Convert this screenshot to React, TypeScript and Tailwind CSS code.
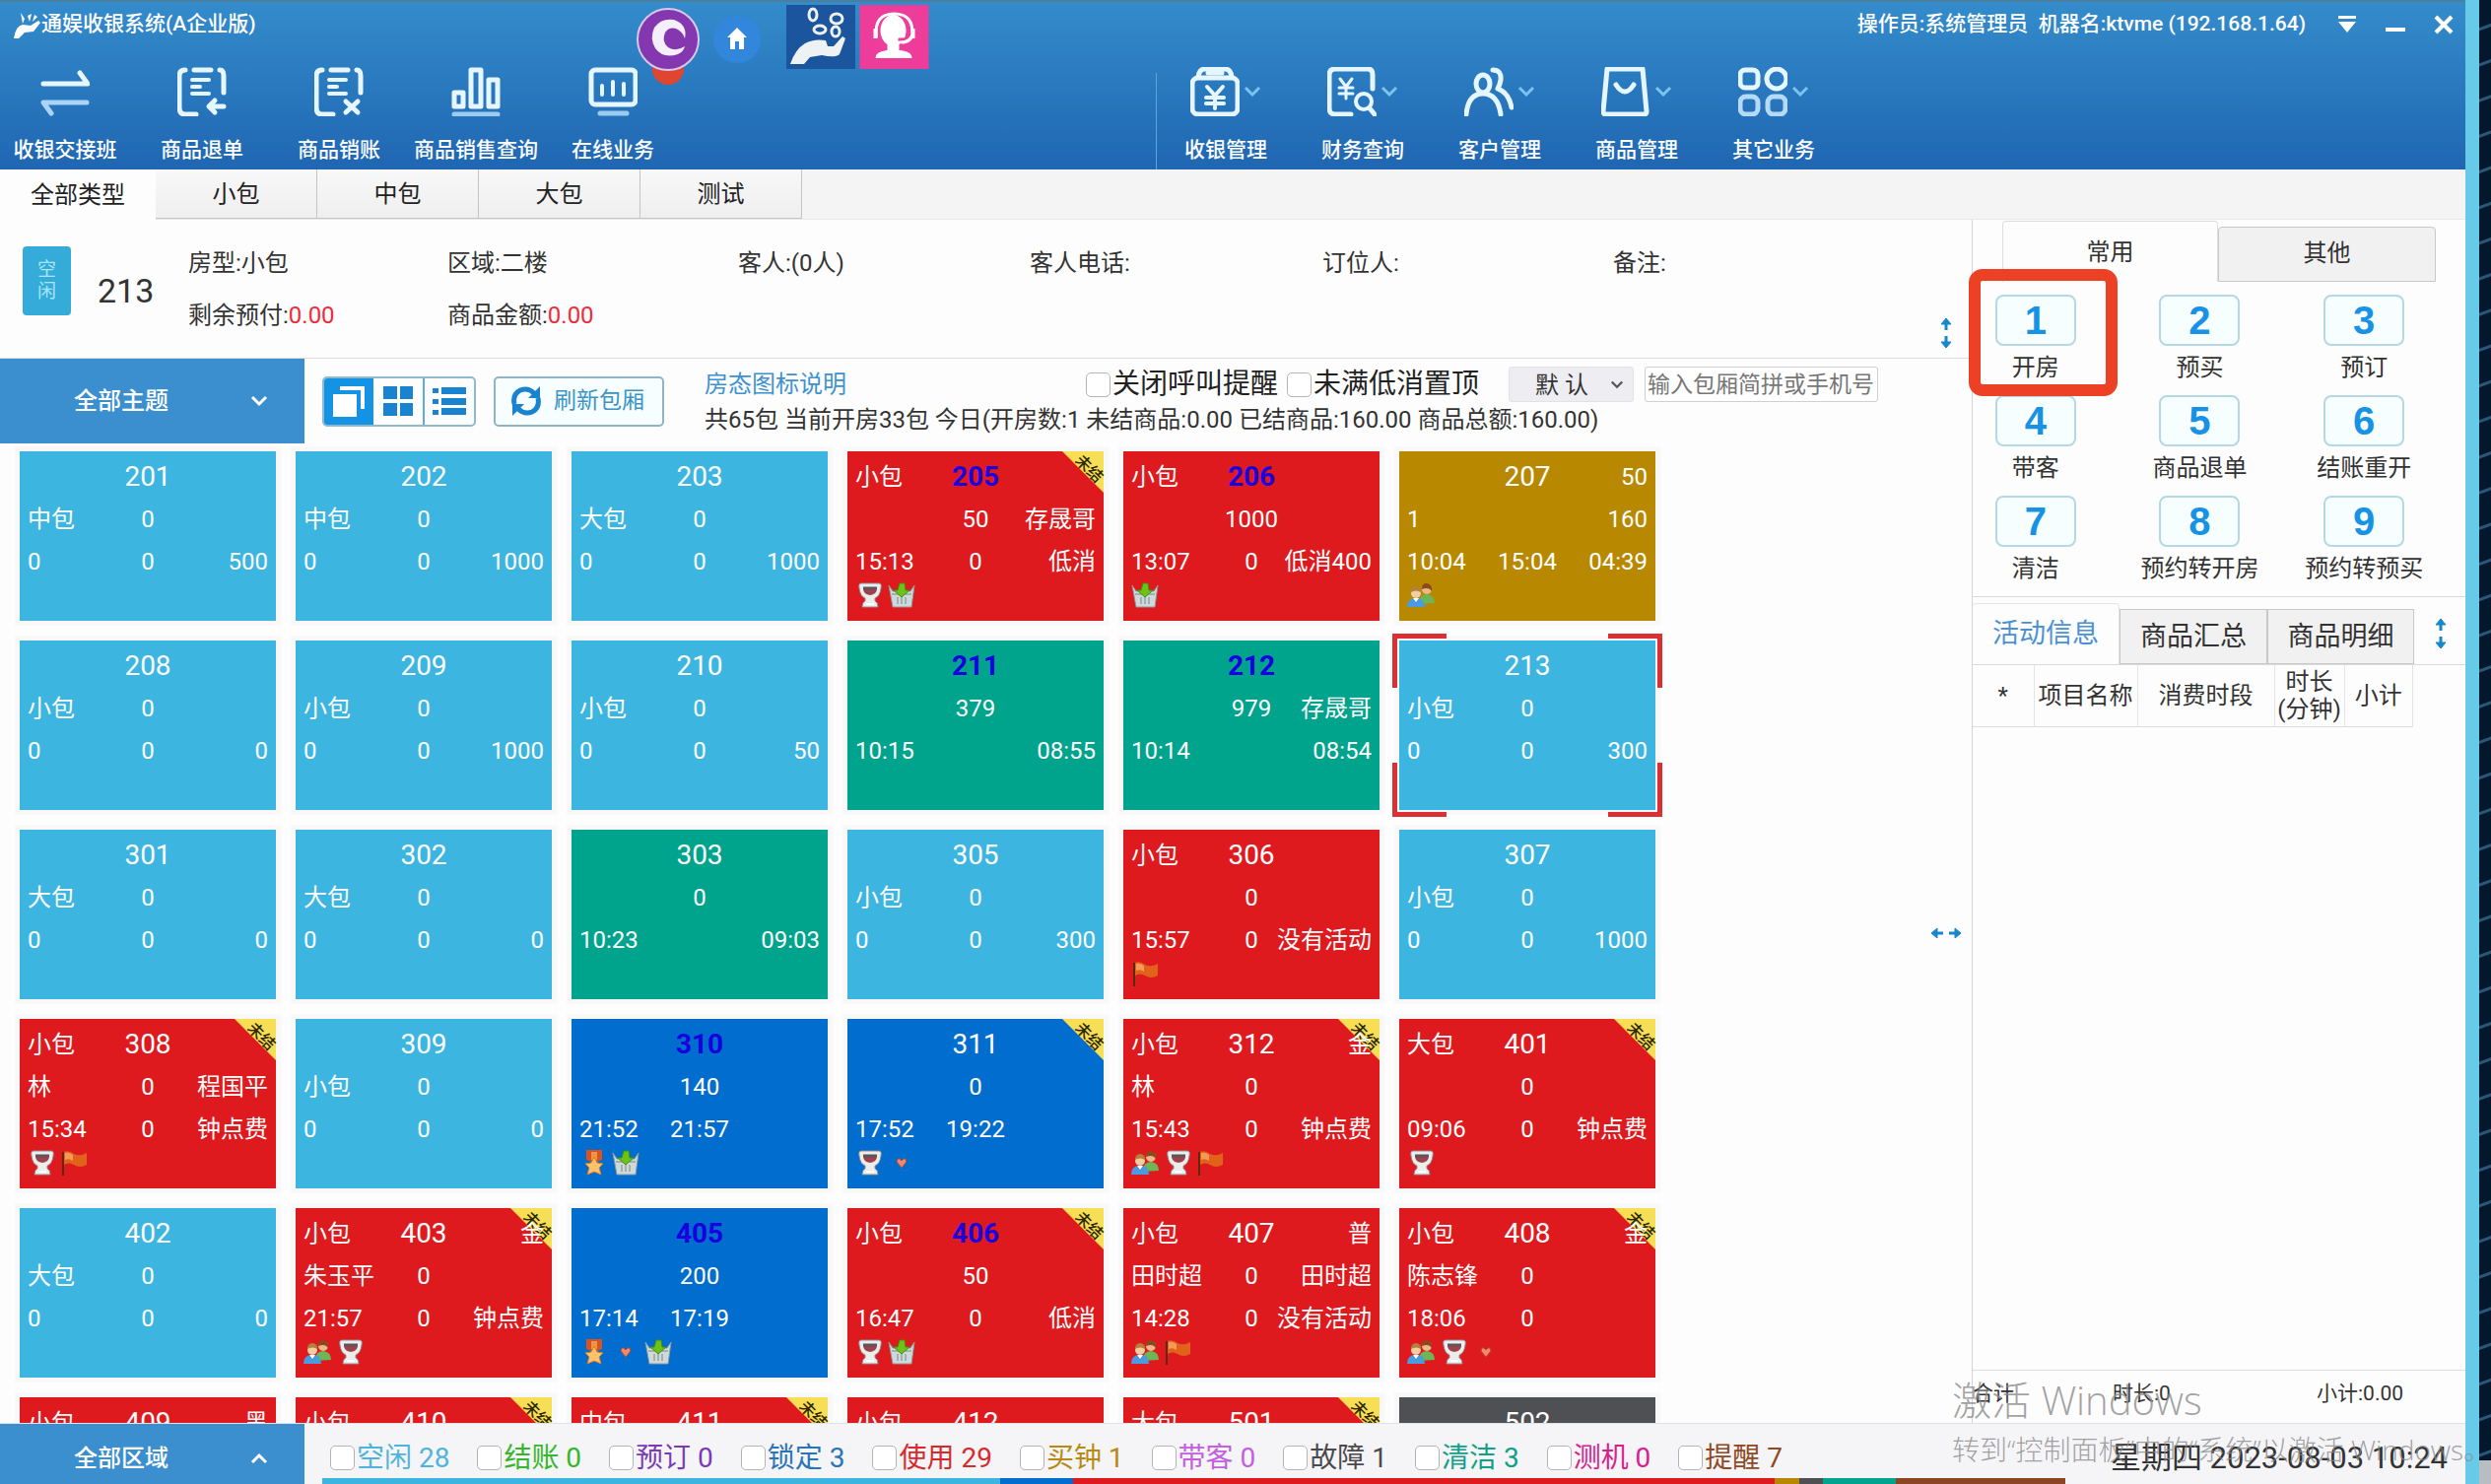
import type { ReactNode } from 'react'

type IconName = 'cup' | 'basket' | 'people' | 'flag' | 'medal' | 'heart'

type Room = {
  no: string
  color: string
  // three rows of left / middle / right; the middle of the first row is the room number
  tl?: string
  tr?: string
  row2?: [string, string, string]
  row3?: [string, string, string]
  icons?: IconName[]
  blue?: boolean
  unpaid?: boolean
  selected?: boolean
}

const FREE = 'bg-[#3db5e1]'
const USED = 'bg-[#de1a1e]'
const CLEAN = 'bg-[#00a38c]'
const LOCKED = 'bg-[#016dce]'
const CLOCK = 'bg-[#b88800]'
const BROKEN = 'bg-[#4f5054]'

const free = (no: string, kind: string, min: string): Room => ({
  no,
  color: FREE,
  row2: [kind, '0', ''],
  row3: ['0', '0', min],
})

const rooms: Room[] = [
  free('201', '中包', '500'),
  free('202', '中包', '1000'),
  free('203', '大包', '1000'),
  { no: '205', color: USED, tl: '小包', blue: true, unpaid: true, row2: ['', '50', '存晟哥'], row3: ['15:13', '0', '低消'], icons: ['cup', 'basket'] },
  { no: '206', color: USED, tl: '小包', blue: true, row2: ['', '1000', ''], row3: ['13:07', '0', '低消400'], icons: ['basket'] },
  { no: '207', color: CLOCK, tr: '50', row2: ['1', '', '160'], row3: ['10:04', '15:04', '04:39'], icons: ['people'] },
  free('208', '小包', '0'),
  free('209', '小包', '1000'),
  free('210', '小包', '50'),
  { no: '211', color: CLEAN, blue: true, row2: ['', '379', ''], row3: ['10:15', '', '08:55'] },
  { no: '212', color: CLEAN, blue: true, row2: ['', '979', '存晟哥'], row3: ['10:14', '', '08:54'] },
  { ...free('213', '小包', '300'), selected: true },
  free('301', '大包', '0'),
  free('302', '大包', '0'),
  { no: '303', color: CLEAN, row2: ['', '0', ''], row3: ['10:23', '', '09:03'] },
  free('305', '小包', '300'),
  { no: '306', color: USED, tl: '小包', row2: ['', '0', ''], row3: ['15:57', '0', '没有活动'], icons: ['flag'] },
  free('307', '小包', '1000'),
  { no: '308', color: USED, tl: '小包', unpaid: true, row2: ['林', '0', '程国平'], row3: ['15:34', '0', '钟点费'], icons: ['cup', 'flag'] },
  free('309', '小包', '0'),
  { no: '310', color: LOCKED, blue: true, row2: ['', '140', ''], row3: ['21:52', '21:57', ''], icons: ['medal', 'basket'] },
  { no: '311', color: LOCKED, unpaid: true, row2: ['', '0', ''], row3: ['17:52', '19:22', ''], icons: ['cup', 'heart'] },
  { no: '312', color: USED, tl: '小包', tr: '金', unpaid: true, row2: ['林', '0', ''], row3: ['15:43', '0', '钟点费'], icons: ['people', 'cup', 'flag'] },
  { no: '401', color: USED, tl: '大包', unpaid: true, row2: ['', '0', ''], row3: ['09:06', '0', '钟点费'], icons: ['cup'] },
  free('402', '大包', '0'),
  { no: '403', color: USED, tl: '小包', tr: '金', unpaid: true, row2: ['朱玉平', '0', ''], row3: ['21:57', '0', '钟点费'], icons: ['people', 'cup'] },
  { no: '405', color: LOCKED, blue: true, row2: ['', '200', ''], row3: ['17:14', '17:19', ''], icons: ['medal', 'heart', 'basket'] },
  { no: '406', color: USED, tl: '小包', blue: true, unpaid: true, row2: ['', '50', ''], row3: ['16:47', '0', '低消'], icons: ['cup', 'basket'] },
  { no: '407', color: USED, tl: '小包', tr: '普', row2: ['田时超', '0', '田时超'], row3: ['14:28', '0', '没有活动'], icons: ['people', 'flag'] },
  { no: '408', color: USED, tl: '小包', tr: '金', unpaid: true, row2: ['陈志锋', '0', ''], row3: ['18:06', '0', ''], icons: ['people', 'cup', 'heart'] },
  { no: '409', color: USED, tl: '小包', tr: '黑' },
  { no: '410', color: USED, tl: '小包', unpaid: true },
  { no: '411', color: USED, tl: '中包', unpaid: true },
  { no: '412', color: USED, tl: '小包' },
  { no: '501', color: USED, tl: '大包', unpaid: true },
  { no: '502', color: BROKEN },
]

const statuses = [
  { name: '空闲', count: 28, text: 'text-[#4fb4dc]', bar: 'bg-[#3db5e1]' },
  { name: '结账', count: 0, text: 'text-[#35b62c]', bar: '' },
  { name: '预订', count: 0, text: 'text-[#7a3bb8]', bar: '' },
  { name: '锁定', count: 3, text: 'text-[#2a74b8]', bar: 'bg-[#016dce]' },
  { name: '使用', count: 29, text: 'text-[#d8292c]', bar: 'bg-[#de1a1e]' },
  { name: '买钟', count: 1, text: 'text-[#b88a14]', bar: 'bg-[#b88800]' },
  { name: '带客', count: 0, text: 'text-[#c45fe0]', bar: '' },
  { name: '故障', count: 1, text: 'text-[#4a4a4e]', bar: 'bg-[#4f5054]' },
  { name: '清洁', count: 3, text: 'text-[#12a088]', bar: 'bg-[#00a38c]' },
  { name: '测机', count: 0, text: 'text-[#d8218c]', bar: '' },
  { name: '提醒', count: 7, text: 'text-[#8f4a24]', bar: 'bg-[#8c4623]' },
]

const actions = ['开房', '预买', '预订', '带客', '商品退单', '结账重开', '清洁', '预约转开房', '预约转预买']

function Line({ children }: { children: ReactNode }) {
  return (
    <svg viewBox="0 0 50 50" className="h-[50px] w-[50px]" fill="none" stroke="#e6f6ff" strokeWidth="5" strokeLinecap="round" strokeLinejoin="round">
      {children}
    </svg>
  )
}

const leftTools = [
  {
    label: '收银交接班',
    icon: (
      <Line>
        <path d="M3 17H48L40 6" />
        <path d="M47 36H3L11 47" stroke="#a9d4f5" />
      </Line>
    ),
  },
  {
    label: '商品退单',
    icon: (
      <Line>
        <path d="M8 3Q2 3 2 9V41Q2 48 8 48H19M17 3H34M43 3Q47 3 47 9V26" />
        <path d="M15 13H32M15 20H23M15 27H32" strokeWidth="4" />
        <path d="M47 40H33M38 34L32 40L38 46" />
      </Line>
    ),
  },
  {
    label: '商品销账',
    icon: (
      <Line>
        <path d="M8 3Q2 3 2 9V41Q2 48 8 48H19M17 3H34M43 3Q47 3 47 9V26" />
        <path d="M15 13H32M15 20H23M15 27H32" strokeWidth="4" />
        <path d="M32 35L44 46M44 35L32 46" />
      </Line>
    ),
  },
  {
    label: '商品销售查询',
    icon: (
      <Line>
        <rect x="3" y="26" width="9" height="14" />
        <rect x="20" y="3" width="10" height="37" />
        <rect x="38" y="13" width="9" height="27" />
        <path d="M3 48H47" stroke="#9ccbf0" />
      </Line>
    ),
  },
  {
    label: '在线业务',
    icon: (
      <Line>
        <rect x="3" y="3" width="45" height="35" rx="4" />
        <path d="M14 19V28M25 15V28M36 17V28" strokeWidth="4" />
        <path d="M12 47H39" stroke="#9ccbf0" />
      </Line>
    ),
  },
]

const rightTools = [
  {
    label: '收银管理',
    icon: (
      <Line>
        <rect x="2" y="11" width="46" height="37" rx="6" />
        <path d="M8 10Q9 2 15 2H35Q41 2 42 10M18 6H32" />
        <path d="M17 20L25 29L33 20M25 29V42M16 31H34M16 37H34" strokeWidth="4" />
      </Line>
    ),
  },
  {
    label: '财务查询',
    icon: (
      <Line>
        <path d="M24 48H8Q2 48 2 42V8Q2 2 8 2H41Q46 2 46 8V22" />
        <path d="M13 12L19 20L25 12M19 20V32M12 21H26M12 27H26" strokeWidth="3" />
        <circle cx="37" cy="35" r="8" strokeWidth="4" />
        <path d="M43 42L48 48" />
      </Line>
    ),
  },
  {
    label: '客户管理',
    icon: (
      <Line>
        <ellipse cx="19" cy="17" rx="7" ry="9" />
        <path d="M2 48Q4 27 19 27Q34 27 37 48" />
        <path d="M29 3Q38 3 37 13Q36 19 34 22Q45 26 48 41" />
      </Line>
    ),
  },
  {
    label: '商品管理',
    icon: (
      <Line>
        <path d="M6 2H42L46 45Q46 48 43 48H5Q2 48 2 45Z" />
        <path d="M15 18Q24 32 33 18" />
      </Line>
    ),
  },
  {
    label: '其它业务',
    icon: (
      <Line>
        <rect x="2" y="3" width="18" height="18" rx="5" />
        <circle cx="39" cy="12" r="10" />
        <rect x="2" y="30" width="18" height="18" rx="6" stroke="#b5daf7" />
        <rect x="30" y="30" width="18" height="18" rx="6" stroke="#b5daf7" />
      </Line>
    ),
  },
]

function Chevron({ up = false, className = '' }: { up?: boolean; className?: string }) {
  return (
    <svg viewBox="0 0 18 12" className={className} fill="none" stroke="currentColor" strokeWidth="3">
      <path d={up ? 'M2 10L9 3L16 10' : 'M2 2L9 9L16 2'} />
    </svg>
  )
}

function ResizeHandle({ horizontal = false }: { horizontal?: boolean }) {
  return (
    <svg viewBox="0 0 12 32" className={horizontal ? 'h-[32px] w-[12px] rotate-90' : 'h-[32px] w-[12px]'} fill="#1787cc" stroke="#1787cc">
      <path d="M6 1L11 7H1Z M6 31L11 25H1Z" strokeWidth="1" />
      <path d="M6 6V13M6 19V26" strokeWidth="3" />
    </svg>
  )
}

function TileIcon({ name }: { name: IconName }) {
  return (
    <svg viewBox="0 0 28 26" className="h-[26px] w-[28px]">
      {name === 'cup' && (
        <>
          <path d="M6 1H24Q27 1 26 6Q25 14 20 16V19Q23 20 23 25H7Q7 20 10 19V16Q5 14 4 6Q3 1 6 1Z" fill="#ececec" stroke="#8f8f8f" />
          <path d="M8 6H22Q22 12 15 13Q8 12 8 6Z" fill="#a04048" />
          <path d="M8 6H22" stroke="#5c5560" strokeWidth="3" />
          <path d="M11 22H19" stroke="#fff" strokeWidth="2" />
        </>
      )}
      {name === 'basket' && (
        <>
          <path d="M1 3L5 9H23L27 3L24 25H5Z" fill="#cfd9da" stroke="#8b9a9c" />
          <path d="M4 12H24M10 15V22M14 15V22M18 15V22" stroke="#a3b0b2" strokeWidth="2" />
          <path d="M14 15L6 8H10L12 1H17L18 8H22Z" fill="#6cc316" stroke="#3f8f12" />
        </>
      )}
      {name === 'people' && (
        <>
          <circle cx="20" cy="7" r="5" fill="#e9b98c" />
          <path d="M15 7Q15 0 20 1Q26 2 25 9Q22 4 15 7Z" fill="#8a4a1c" />
          <path d="M12 22Q12 12 20 12Q28 13 28 21Z" fill="#6db556" />
          <circle cx="9" cy="11" r="5" fill="#f2cda4" />
          <path d="M4 10Q4 4 9 4Q14 4 14 10Q9 7 4 10Z" fill="#b5813a" />
          <path d="M0 25Q0 16 9 16Q18 16 18 25Z" fill="#4b9be0" />
          <path d="M6 16L9 20L12 16Z" fill="#fff" />
        </>
      )}
      {name === 'flag' && (
        <>
          <path d="M3 2V26" stroke="#5d2a10" strokeWidth="2" />
          <path d="M4 2Q9 0 14 4Q20 7 27 3V15Q20 19 14 15Q9 12 4 15Z" fill="#e2621b" />
          <path d="M5 3Q9 2 13 5V11Q9 8 5 10Z" fill="#f59a55" />
        </>
      )}
      {name === 'medal' && (
        <>
          <path d="M7 0H23V10L15 13L7 10Z" fill="#d9531e" />
          <path d="M12 2H18V10H12Z" fill="#f0924a" />
          <path d="M15 7L18 13L24 14L20 18L22 25L15 22L8 25L10 18L6 14L12 13Z" fill="#ffc46b" stroke="#e07b22" />
        </>
      )}
      {name === 'heart' && <path d="M14 18L9 12L10 9H12L14 11L16 9H18L19 12Z" fill="#f08a6c" stroke="#b84b36" />}
    </svg>
  )
}

function Row({ cells }: { cells: [string, string, string] }) {
  return (
    <span className="grid h-[43px] grid-cols-[1fr_auto_1fr] items-center whitespace-nowrap">
      <span className="text-left">{cells[0]}</span>
      <span>{cells[1]}</span>
      <span className="text-right">{cells[2]}</span>
    </span>
  )
}

function RoomTile({ room }: { room: Room }) {
  return (
    <button type="button" className={`relative flex h-[172px] flex-col px-2 pt-[4px] text-[24px] text-white ring-[5px] ring-[#f8f8f8] ${room.color}`}>
      {room.unpaid && (
        <span className="absolute top-0 right-0 h-[42px] w-[42px]">
          <svg viewBox="0 0 42 42" className="absolute inset-0 h-full w-full">
            <path d="M0 0H42V42Z" fill="#f7de55" />
          </svg>
          <span className="absolute top-[9px] left-[11px] rotate-45 text-[16px] leading-[18px] font-medium whitespace-nowrap text-[#2d2600]">未结</span>
        </span>
      )}
      {room.selected && (
        <span className="absolute -inset-[7px]">
          <span className="absolute top-0 left-0 h-[55px] w-[55px] border-t-[5px] border-l-[5px] border-[#dc2f35]" />
          <span className="absolute top-0 right-0 h-[55px] w-[55px] border-t-[5px] border-r-[5px] border-[#dc2f35]" />
          <span className="absolute bottom-0 left-0 h-[55px] w-[55px] border-b-[5px] border-l-[5px] border-[#dc2f35]" />
          <span className="absolute right-0 bottom-0 h-[55px] w-[55px] border-r-[5px] border-b-[5px] border-[#dc2f35]" />
        </span>
      )}
      <span className="relative grid h-[43px] w-full grid-cols-[1fr_auto_1fr] items-center whitespace-nowrap">
        <span className="text-left">{room.tl}</span>
        <span className={room.blue ? 'text-[28px] font-bold text-[#1a00e0]' : 'text-[28px]'}>{room.no}</span>
        <span className="text-right">{room.tr}</span>
      </span>
      <span className="w-full">
        {room.row2 && <Row cells={room.row2} />}
        {room.row3 && <Row cells={room.row3} />}
      </span>
      <span className="flex gap-[5px]">
        {room.icons?.map((name) => (
          <TileIcon key={name} name={name} />
        ))}
      </span>
    </button>
  )
}

function Check({ label, className = '' }: { label: string; className?: string }) {
  return (
    <label className={`flex items-center gap-[2px] text-[28px] leading-[36px] whitespace-nowrap ${className}`}>
      <input type="checkbox" className="h-[25px] w-[25px] appearance-none rounded-[5px] border border-[#b4b4b4] bg-white checked:bg-[#1787cc]" />
      {label}
    </label>
  )
}

function Header() {
  return (
    <header className="relative border-t-2 border-[#4a7f9f] bg-linear-to-b from-[#348ccb] to-[#2066b2] text-[21px] font-medium text-white">
      <div className="flex h-[46px] items-center">
        <svg viewBox="0 0 28 28" className="ml-[14px] h-[28px] w-[28px]" fill="#fff">
          <path d="M0 28Q2 15 9 14L17 15L25 10L27 12L20 21L11 22L5 28Z" />
          <path d="M7 2L11 8L9 13ZM14 5L18 3L16 11ZM21 4L24 6L19 11Z" />
        </svg>
        <h1>通娱收银系统(A企业版)</h1>
        <p className="ml-auto">操作员:系统管理员&nbsp; 机器名:ktvme (192.168.1.64)</p>
        <div className="mr-[12px] ml-[32px] flex gap-[29px]">
          <button type="button" aria-label="菜单">
            <svg viewBox="0 0 20 20" className="h-[20px] w-[20px]" fill="#fff">
              <path d="M1 1H19V4H1ZM1 7H19L10 18Z" />
            </svg>
          </button>
          <button type="button" aria-label="最小化">
            <svg viewBox="0 0 20 20" className="h-[20px] w-[20px]" fill="#fff">
              <path d="M0 13H20V17H0Z" />
            </svg>
          </button>
          <button type="button" aria-label="关闭">
            <svg viewBox="0 0 20 20" className="h-[20px] w-[20px]" fill="none" stroke="#fff" strokeWidth="4">
              <path d="M2 2L18 18M18 2L2 18" />
            </svg>
          </button>
        </div>
      </div>

      <div className="grid h-[124px] grid-cols-[1173fr_1329fr]">
        <nav className="flex gap-[7px] pt-[20px]">
          {leftTools.map((t) => (
            <button key={t.label} type="button" className="flex w-[132px] flex-col items-center gap-[20px]">
              {t.icon}
              <span className="leading-[28px] whitespace-nowrap">{t.label}</span>
            </button>
          ))}
        </nav>
        <div className="flex">
          <span className="mt-[26px] mr-[4px] w-px bg-[#5aa6de]" />
          <nav className="flex gap-[7px] pt-[20px]">
            {rightTools.map((t) => (
              <button key={t.label} type="button" className="flex w-[132px] flex-col items-center gap-[20px]">
                <span className="flex items-center gap-[4px]">
                  {t.icon}
                  <Chevron className="h-[12px] w-[18px] text-[#7cc4f0]" />
                </span>
                <span className="leading-[28px] whitespace-nowrap">{t.label}</span>
              </button>
            ))}
          </nav>
        </div>
      </div>

      {/* floating desktop widgets */}
      <div className="absolute top-[3px] left-[646px] flex">
        <svg viewBox="0 0 64 84" className="h-[84px] w-[64px]">
          <circle cx="32" cy="65" r="16" fill="#e0452f" />
          <circle cx="32" cy="35" r="31" fill="#8437ae" stroke="#d7c8ee" strokeWidth="2" />
          <path d="M49 34Q52 20 38 15Q25 13 18 23Q13 34 19 44Q27 55 42 50Q48 47 49 42Q40 48 32 43Q25 37 29 28Q34 21 42 25Q47 28 49 34Z" fill="#f4effa" />
        </svg>
        <svg viewBox="0 0 48 48" className="mt-[11px] ml-[14px] h-[48px] w-[48px]">
          <circle cx="24" cy="24" r="24" fill="#3286dc" />
          <path d="M24 12L34 22H31V34H26V26H22V34H17V22H14Z" fill="#fff" />
        </svg>
        <svg viewBox="0 0 70 65" className="ml-[26px] h-[65px] w-[70px]">
          <rect width="70" height="65" fill="#1a559e" />
          <path d="M4 60Q9 45 19 39Q28 34 40 36L42 42L48 42L57 32L60 34L54 50Q50 54 36 51L24 53L18 60Z" fill="#eef2f5" />
          <g fill="none" stroke="#eef2f5" strokeWidth="3">
            <ellipse cx="27" cy="10" rx="4" ry="6" />
            <ellipse cx="51" cy="14" rx="6" ry="5" />
            <ellipse cx="34" cy="25" rx="6" ry="4" />
            <ellipse cx="50" cy="27" rx="4" ry="5" />
          </g>
        </svg>
        <svg viewBox="0 0 70 65" className="ml-[4px] h-[65px] w-[71px]">
          <rect width="70" height="65" fill="#ee3c9a" />
          <path d="M17 33Q14 9 35 9Q56 9 53 33" fill="none" stroke="#fff" strokeWidth="3" />
          <ellipse cx="34" cy="26" rx="13" ry="16" fill="#fff" />
          <path d="M28 38H40V46Q53 47 53 54H16Q16 47 28 46Z" fill="#fff" />
          <path d="M53 28Q52 36 39 35" fill="none" stroke="#ee3c9a" strokeWidth="3" />
          <path d="M54 27Q53 38 42 38" fill="none" stroke="#fff" strokeWidth="3" />
          <path d="M14 24H18V34H14ZM52 24H56V34H52Z" fill="#fff" />
        </svg>
      </div>
    </header>
  )
}

function TypeTabs() {
  return (
    <nav className="flex h-[51px] border-b border-[#e8e8e8] bg-[#f4f4f4] text-[24px] text-[#222]">
      <button type="button" className="-mb-px w-[158px] bg-[#fdfdfd]">
        全部类型
      </button>
      {['小包', '中包', '大包', '测试'].map((t) => (
        <button key={t} type="button" className="w-[164px] border-r border-b border-[#c4c4c8] bg-linear-to-b from-[#f8f8f8] to-[#efefef]">
          {t}
        </button>
      ))}
    </nav>
  )
}

function RoomInfo() {
  const money = 'text-[#ee2b3c]'
  return (
    <section className="flex h-[141px] border-b border-[#dcdcdc] pt-[17px] text-[24px] text-[#333]">
      <span className="mt-[10px] ml-[23px] flex h-[70px] w-[49px] items-center justify-center rounded-[4px] bg-[#35abd9] text-[19px] leading-[22px] text-[#a5e6fb]">
        <span className="w-[19px]">空闲</span>
      </span>
      <strong className="mt-[10px] ml-[27px] w-[92px] text-[34px] leading-[90px] font-normal">213</strong>
      <div className="grid flex-1 grid-cols-[263px_295px_296px_297px_295px_1fr] grid-rows-[53px_53px] items-center whitespace-nowrap">
        <span>房型:小包</span>
        <span>区域:二楼</span>
        <span>客人:(0人)</span>
        <span>客人电话:</span>
        <span>订位人:</span>
        <span>备注:</span>
        <span>
          剩余预付:<span className={money}>0.00</span>
        </span>
        <span>
          商品金额:<span className={money}>0.00</span>
        </span>
      </div>
      <span className="mr-[20px] mb-[9px] self-end">
        <ResizeHandle />
      </span>
    </section>
  )
}

function FilterBar() {
  return (
    <section className="flex h-[86px] items-center whitespace-nowrap text-[#333]">
      <button type="button" className="flex h-full w-[309px] items-center bg-[#3c8fcf] pr-[37px] pl-[75px] text-[24px] font-medium text-white">
        全部主题
        <Chevron className="ml-auto h-[12px] w-[18px]" />
      </button>
      <div className="ml-[18px] flex h-[51px] w-[156px] overflow-hidden rounded-[5px] border-2 border-[#8db9d2]">
        <button type="button" aria-label="卡片" className="flex flex-1 items-center justify-center bg-[#1493e4]">
          <svg viewBox="0 0 34 32" className="h-[32px] w-[34px]" fill="#fff">
            <path d="M1 9H25V32H1ZM8 1H33V24H29V5H8Z" />
          </svg>
        </button>
        <button type="button" aria-label="宫格" className="flex flex-1 items-center justify-center border-r-2 border-[#5aaedb]">
          <svg viewBox="0 0 32 32" className="h-[32px] w-[32px]" fill="#1a83cf">
            <path d="M1 1H15V14H1ZM18 1H31V14H18ZM1 18H15V31H1ZM18 18H31V31H18Z" />
          </svg>
        </button>
        <button type="button" aria-label="列表" className="flex flex-1 items-center justify-center">
          <svg viewBox="0 0 34 28" className="h-[28px] w-[34px]" fill="#1a83cf">
            <path d="M0 1H6V6H0ZM9 0H34V7H9ZM0 12H6V17H0ZM9 11H34V18H9ZM0 23H6V28H0ZM9 21H34V28H9Z" />
          </svg>
        </button>
      </div>
      <button type="button" className="ml-[18px] flex h-[51px] w-[173px] items-center gap-[12px] rounded-[5px] border-2 border-[#8fb4c4] bg-[#f7feff] pl-[15px] text-[23px] text-[#3a94c4]">
        <svg viewBox="0 0 32 32" className="h-[32px] w-[32px]" fill="none" stroke="#1a83cf" strokeWidth="5">
          <path d="M4 19Q2 9 10 5Q18 2 24 8M28 13Q30 23 22 27Q14 30 8 24" />
          <path d="M30 1V13H18ZM2 31V19H14Z" fill="#1a83cf" stroke="none" />
        </svg>
        刷新包厢
      </button>
      <div className="mr-[95px] ml-[41px] flex-1 pt-[2px] text-[24px]">
        <div className="flex h-[36px] items-center">
          <a href="#legend" className="mr-auto text-[#3e92cf]">
            房态图标说明
          </a>
          <Check label="关闭呼叫提醒" className="text-[#222]" />
          <Check label="未满低消置顶" className="ml-[9px] text-[#222]" />
          <span className="relative ml-[30px]">
            <select aria-label="排序" className="h-[36px] w-[127px] appearance-none rounded-[3px] border border-[#e2e2e6] bg-[#eeeef2] pl-[26px] text-[24px] text-[#333]">
              <option>默 认</option>
            </select>
            <Chevron className="absolute top-[14px] right-[10px] h-[9px] w-[14px] text-[#555]" />
          </span>
          <input aria-label="搜索包厢" placeholder="输入包厢简拼或手机号" className="ml-[11px] h-[36px] w-[237px] rounded-[3px] border border-[#d0d0d0] bg-white px-[2px] text-[23px] placeholder:text-[#777]" />
        </div>
        <p className="leading-[36px]">共65包 当前开房33包 今日(开房数:1 未结商品:0.00 已结商品:160.00 商品总额:160.00)</p>
      </div>
    </section>
  )
}

function Sidebar() {
  return (
    <aside className="flex w-[501px] shrink-0 flex-col border-l border-[#d4d4d4] text-[24px] text-[#333]">
      <div className="flex h-[63px] items-end pl-[30px]">
        <button type="button" className="h-[62px] w-[219px] rounded-t-[4px] border border-b-0 border-[#dedede]">
          常用
        </button>
        <button type="button" className="h-[56px] w-[221px] rounded-t-[4px] border border-[#c8c8cc] bg-[#f1f1f2] pb-[2px]">
          其他
        </button>
      </div>

      <div className="relative grid h-[320px] grid-cols-3 content-start gap-y-[6px] border-b border-[#dadada] pt-[13px]">
        {actions.map((name, i) => (
          <button key={name} type="button" className="mr-[39px] flex flex-col items-center whitespace-nowrap">
            <span className="flex h-[52px] w-[82px] items-center justify-center rounded-[8px] border-2 border-[#b4d8e4] bg-[#f7feff] font-['Liberation_Sans',sans-serif] text-[40px] font-bold text-[#1792e4]">
              {i + 1}
            </span>
            <span className="leading-[44px]">{name}</span>
          </button>
        ))}
        {/* highlight round the first action */}
        <span className="pointer-events-none absolute -top-[13px] -left-[4px] h-[129px] w-[151px] rounded-[14px] border-12 border-[#ec4124]" />
      </div>

      <div className="flex h-[69px] items-end border-b border-[#dadada] text-[27px]">
        <button type="button" className="h-[62px] w-[149px] rounded-t-[4px] border-t border-r border-[#e4e4e4] text-[#4a90d4]">
          活动信息
        </button>
        <button type="button" className="h-[56px] w-[150px] border border-[#c8c8cc] bg-[#f1f1f2]">
          商品汇总
        </button>
        <button type="button" className="h-[56px] w-[149px] border border-[#c8c8cc] bg-[#f1f1f2]">
          商品明细
        </button>
        <span className="mb-[15px] ml-[21px]">
          <ResizeHandle />
        </span>
      </div>

      <table className="w-[447px] table-fixed border-collapse leading-[28px] whitespace-nowrap">
        <thead>
          <tr className="h-[62px] border-b border-[#dcdcdc]">
            <th className="w-[62px] border-r border-[#e4e4e4] font-normal">*</th>
            <th className="w-[105px] border-r border-[#e4e4e4] font-normal">项目名称</th>
            <th className="w-[139px] border-r border-[#e4e4e4] font-normal">消费时段</th>
            <th className="w-[71px] border-r border-[#e4e4e4] font-normal">
              时长
              <br />
              (分钟)
            </th>
            <th className="border-r border-[#e4e4e4] font-normal">小计</th>
          </tr>
        </thead>
      </table>

      <div className="mt-auto grid h-[54px] grid-cols-[142px_207px_1fr] border-t border-[#dcdcdc] text-[21px] leading-[46px]">
        <span>合计</span>
        <span>时长:0</span>
        <span>小计:0.00</span>
      </div>
    </aside>
  )
}

function Footer() {
  return (
    <footer className="flex h-[62px] shrink-0 border-t border-[#dfe1e4] bg-[#f5f5f7]">
      <button type="button" className="flex w-[309px] shrink-0 items-center bg-[#3c8fcf] pt-[8px] pr-[37px] pl-[75px] text-[24px] font-medium text-white">
        全部区域
        <Chevron up className="ml-auto h-[12px] w-[18px]" />
      </button>
      <div className="ml-[18px] flex flex-1 flex-col">
        <div className="flex flex-1 items-center gap-[28px] pt-[14px] pl-[8px] whitespace-nowrap">
          {statuses.map((s) => (
            <Check key={s.name} label={`${s.name} ${s.count}`} className={s.text} />
          ))}
          <time className="mr-[18px] ml-auto text-[31px] leading-[36px] text-[#333]">星期四 2023-08-03 10:24</time>
        </div>
        <div className="mr-[406px] flex h-[6px] shrink-0">
          {statuses.map((s) => (
            <span key={s.name} className={s.bar} style={{ flexGrow: s.count }} />
          ))}
        </div>
      </div>
    </footer>
  )
}

export default function App() {
  return (
    <div className="relative flex h-screen overflow-hidden bg-[#03182d] font-['Roboto','Noto_Sans_CJK_SC',sans-serif]">
      <div className="flex min-w-0 flex-1 flex-col bg-[#fdfdfd]">
        <Header />
        <TypeTabs />
        <div className="flex min-h-0 flex-1">
          <main className="flex min-w-0 flex-1 flex-col">
            <RoomInfo />
            <FilterBar />
            <div className="flex min-h-0 flex-1 overflow-hidden pl-[20px]">
              <div className="grid flex-1 grid-cols-[repeat(6,260px)] content-start gap-[20px] pt-[8px]">
                {rooms.map((room) => (
                  <RoomTile key={room.no} room={room} />
                ))}
              </div>
              <span className="mr-[20px] self-center">
                <ResizeHandle horizontal />
              </span>
            </div>
          </main>
          <Sidebar />
        </div>
        <Footer />
      </div>

      {/* window frame and the strip of desktop beside it */}
      <div className="w-[14px] bg-[#66cae8]" />
      <div className="flex w-[12px] flex-col">
        <div className="flex-1 bg-[repeating-linear-gradient(160deg,#03182d_0_26px,#2c5676_27px_29px,#03182d_30px_34px)]" />
        <div className="h-[24px] bg-[#b9bdc2]" />
      </div>

      <div className="pointer-events-none absolute right-0 bottom-[12px] w-[547px] overflow-hidden font-['Open_Sans','Noto_Sans_CJK_SC',sans-serif] font-light whitespace-nowrap text-[#8a8a8a]/80">
        <p className="text-[40px] leading-[54px]">激活 Windows</p>
        <p className="text-[28px] leading-[46px]">转到“控制面板”中的“系统”以激活 Windows。</p>
      </div>
    </div>
  )
}
